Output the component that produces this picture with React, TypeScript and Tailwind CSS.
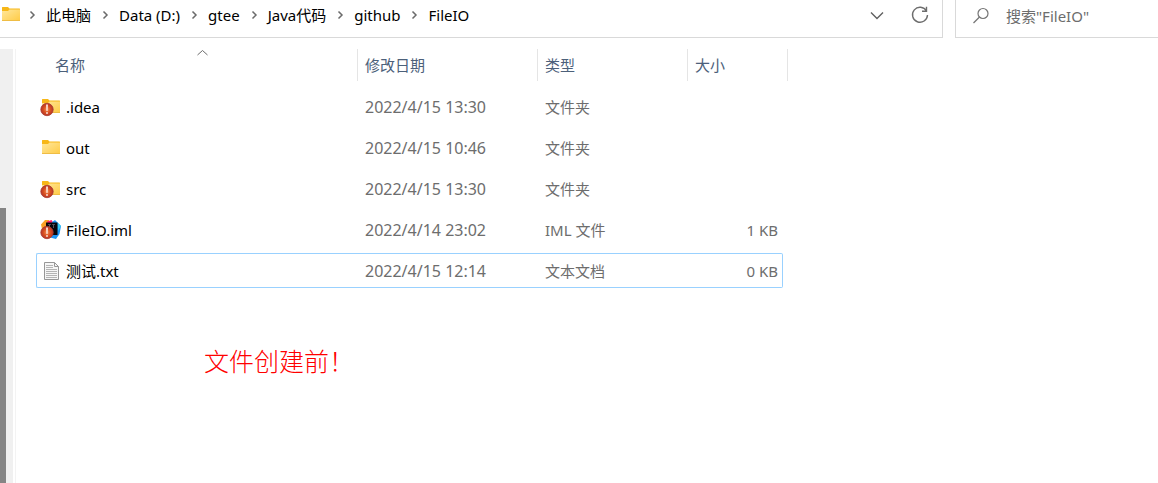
import React from "react";

type IconKind = "folder" | "folder-alert" | "iml" | "text";

interface FileRow {
  name: string;
  date: string;
  type: string;
  size: string;
  icon: IconKind;
  selected?: boolean;
}

const crumbs = ["此电脑", "Data (D:)", "gtee", "Java代码", "github", "FileIO"];

const files: FileRow[] = [
  { name: ".idea", date: "2022/4/15 13:30", type: "文件夹", size: "", icon: "folder-alert" },
  { name: "out", date: "2022/4/15 10:46", type: "文件夹", size: "", icon: "folder" },
  { name: "src", date: "2022/4/15 13:30", type: "文件夹", size: "", icon: "folder-alert" },
  { name: "FileIO.iml", date: "2022/4/14 23:02", type: "IML 文件", size: "1 KB", icon: "iml" },
  { name: "测试.txt", date: "2022/4/15 12:14", type: "文本文档", size: "0 KB", icon: "text", selected: true },
];

function FolderShape() {
  return (
    <>
      <path d="M2 2.500Q2 2 2.500 2H8L9.500 3.500H19.500Q20 3.500 20 4V8H2Z" fill="#f7b718" />
      <path d="M2 6H8L9.500 4.500H20V16H2Z" fill="url(#folder-face)" />
      <path d="M2 15.500H20" stroke="#efbd45" />
    </>
  );
}

function AlertBadge() {
  return (
    <>
      <circle cx="7" cy="12.500" r="6.200" fill="url(#alert-face)" stroke="#a83c30" strokeWidth="0.800" />
      <path d="M6.200 7.500H7.800L7.500 14H6.500ZM6.400 15H7.600V17H6.400Z" fill="#fff" />
    </>
  );
}

function Gradients() {
  return (
    <svg width="0" height="0" className="absolute" aria-hidden="true">
      <defs>
        <linearGradient id="folder-face" x1="0" y1="0" x2="1" y2="1">
          <stop offset="0" stopColor="#ffe79c" />
          <stop offset="1" stopColor="#ffcb45" />
        </linearGradient>
        <radialGradient id="alert-face">
          <stop offset="0" stopColor="#f4925a" />
          <stop offset="0.550" stopColor="#d9501f" />
          <stop offset="1" stopColor="#b5352a" />
        </radialGradient>
      </defs>
    </svg>
  );
}

function FileIcon({ kind }: { kind: IconKind }) {
  return (
    <svg width="22" height="20" viewBox="0 0 22 20" className="shrink-0" aria-hidden="true">
      {(kind === "folder" || kind === "folder-alert") && <FolderShape />}
      {kind === "folder-alert" && <AlertBadge />}
      {kind === "iml" && (
        <>
          <path d="M1 4.500 5 0 9 0 9 5 2 9Z" fill="#f9a126" />
          <path d="M7 1.500 11.500 0 13.500 3 8 6Z" fill="#ff1f6b" />
          <path d="M12 2 15 0 18 3 21 6 19.500 14 16 19 8 17Z" fill="#1c93f3" />
          <path d="M17.500 2.500 21 6 18 11Z" fill="#35cdf6" />
          <path d="M6 2.500H17.500V15H6Z" fill="#08060c" />
          <path d="M8.500 4.500H10.500M12.500 4.500H14.500" stroke="#8e8b96" strokeWidth="1" />
          <path d="M9.500 4V8M13.500 4V8" stroke="#55505c" strokeWidth="1" />
          <AlertBadge />
        </>
      )}
      {kind === "text" && (
        <>
          <path d="M4.500 1.500H14.500L18.500 5.500V18.500H4.500Z" fill="#f6f6f6" stroke="#979797" />
          <path d="M14.500 1.500V5.500H18.500" fill="none" stroke="#979797" />
          <path
            d="M6 4.500H13M6 6.500H13M6 8.500H17M6 10.500H17M6 12.500H17M6 14.500H17M6 16.500H17"
            stroke="#b4b4b4"
          />
        </>
      )}
    </svg>
  );
}

function Separator() {
  return (
    <svg width="26" height="12" viewBox="0 0 26 12" fill="none" className="shrink-0" aria-hidden="true">
      <path d="M10.500 2.500 14 6 10.500 9.500" stroke="#6b6b6b" strokeWidth="1.500" />
    </svg>
  );
}

function AddressBar() {
  return (
    <div className="flex flex-1 items-center border-r border-b border-[#d9d9d9] pb-[7px]">
      <svg width="20" height="20" viewBox="0 0 20 20" className="shrink-0" aria-hidden="true">
        <FolderShape />
      </svg>
      <nav aria-label="路径" className="flex flex-1 items-center text-black">
        {crumbs.map((crumb) => (
          <React.Fragment key={crumb}>
            <Separator />
            <button type="button" className="mr-[2px] whitespace-nowrap">
              {crumb}
            </button>
          </React.Fragment>
        ))}
      </nav>
      <button type="button" aria-label="历史记录" className="mr-6">
        <svg width="18" height="18" viewBox="0 0 18 18" fill="none" stroke="#606060" strokeWidth="1.400">
          <path d="M3 6.500 9 12.500 15 6.500" />
        </svg>
      </button>
      <button type="button" aria-label="刷新" className="mr-3">
        <svg width="20" height="20" viewBox="0 0 20 20" fill="none" stroke="#6d6d6d" strokeWidth="1.400">
          <path d="M16.500 6A7.500 7.500 0 1 0 17.500 10M16.500 1.800V6.300H12" />
        </svg>
      </button>
    </div>
  );
}

function SearchBox() {
  return (
    <label className="flex w-[203px] shrink-0 items-center border-b border-l border-[#d9d9d9] pb-[5px] pl-4">
      <svg width="18" height="18" viewBox="0 0 18 18" fill="none" stroke="#757575" strokeWidth="1.200" className="shrink-0">
        <circle cx="11" cy="6.500" r="5" />
        <path d="M7.500 10 1.500 16" />
      </svg>
      <input
        type="text"
        aria-label="搜索"
        placeholder={'搜索"FileIO"'}
        className="ml-4 w-full min-w-0 bg-transparent outline-none placeholder:text-[#6d6d6d]"
      />
    </label>
  );
}

function FileTable() {
  return (
    <table className="w-[752px] table-fixed border-separate border-spacing-0 text-left text-[#6d6d6d]">
      <colgroup>
        <col className="w-[322px]" />
        <col className="w-[180px]" />
        <col className="w-[150px]" />
        <col className="w-[95px]" />
        <col className="w-[5px]" />
      </colgroup>
      <thead>
        <tr className="h-8 text-[#4c607a]">
          <th className="relative border-r border-[#e5e5e5] pl-[19px] font-normal">
            名称
            <svg width="12" height="7" viewBox="0 0 12 7" fill="none" className="absolute top-0 left-40" aria-hidden="true">
              <path d="M1.500 6 6.500 1.500 11.500 6" stroke="#6d6d6d" />
            </svg>
          </th>
          <th className="border-r border-[#e5e5e5] pl-[7px] font-normal">修改日期</th>
          <th className="border-r border-[#e5e5e5] pl-[7px] font-normal">类型</th>
          <th colSpan={2} className="border-r border-[#e5e5e5] pl-[7px] font-normal">
            大小
          </th>
        </tr>
        <tr className="h-[2px]" aria-hidden="true" />
      </thead>
      {files.map((file) => {
        const edge = file.selected ? "border-[#99d1ff]" : "border-transparent";
        return (
          <tbody key={file.name}>
            <tr className="h-[6px]" aria-hidden="true" />
            <tr className="h-[35px]">
              <td className={`rounded-l-xs border-y border-l pl-[3px] ${edge}`}>
                <div className="flex items-center gap-1 text-black">
                  <FileIcon kind={file.icon} />
                  {file.name}
                </div>
              </td>
              <td className={`border-y pl-[7px] text-base leading-5 ${edge}`}>{file.date}</td>
              <td className={`border-y pl-[7px] ${edge}`}>{file.type}</td>
              <td className={`rounded-r-xs border-y border-r pr-1 text-right ${edge}`}>{file.size}</td>
            </tr>
          </tbody>
        );
      })}
    </table>
  );
}

export default function App() {
  return (
    <div className="flex min-h-screen flex-col bg-white font-['Noto_Sans','Noto_Sans_CJK_SC',sans-serif] text-[15px] leading-5">
      <Gradients />
      <header className="flex h-[38px] gap-3">
        <AddressBar />
        <SearchBox />
      </header>
      <div className="flex flex-1 pt-[11px]">
        <aside className="flex w-[13px] shrink-0 flex-col bg-[#f0f0f0] pt-[159px]">
          <div className="w-[6px] flex-1 bg-[#858585]" />
        </aside>
        <main className="ml-[2px] flex-1 border-l border-[#f3f3f3] pl-5">
          <FileTable />
          <p className="mt-14 ml-[168px] font-['Noto_Sans_CJK_SC',sans-serif] text-[25px] leading-8 font-light text-[#ff0000]">
            文件创建前！
          </p>
        </main>
      </div>
    </div>
  );
}
